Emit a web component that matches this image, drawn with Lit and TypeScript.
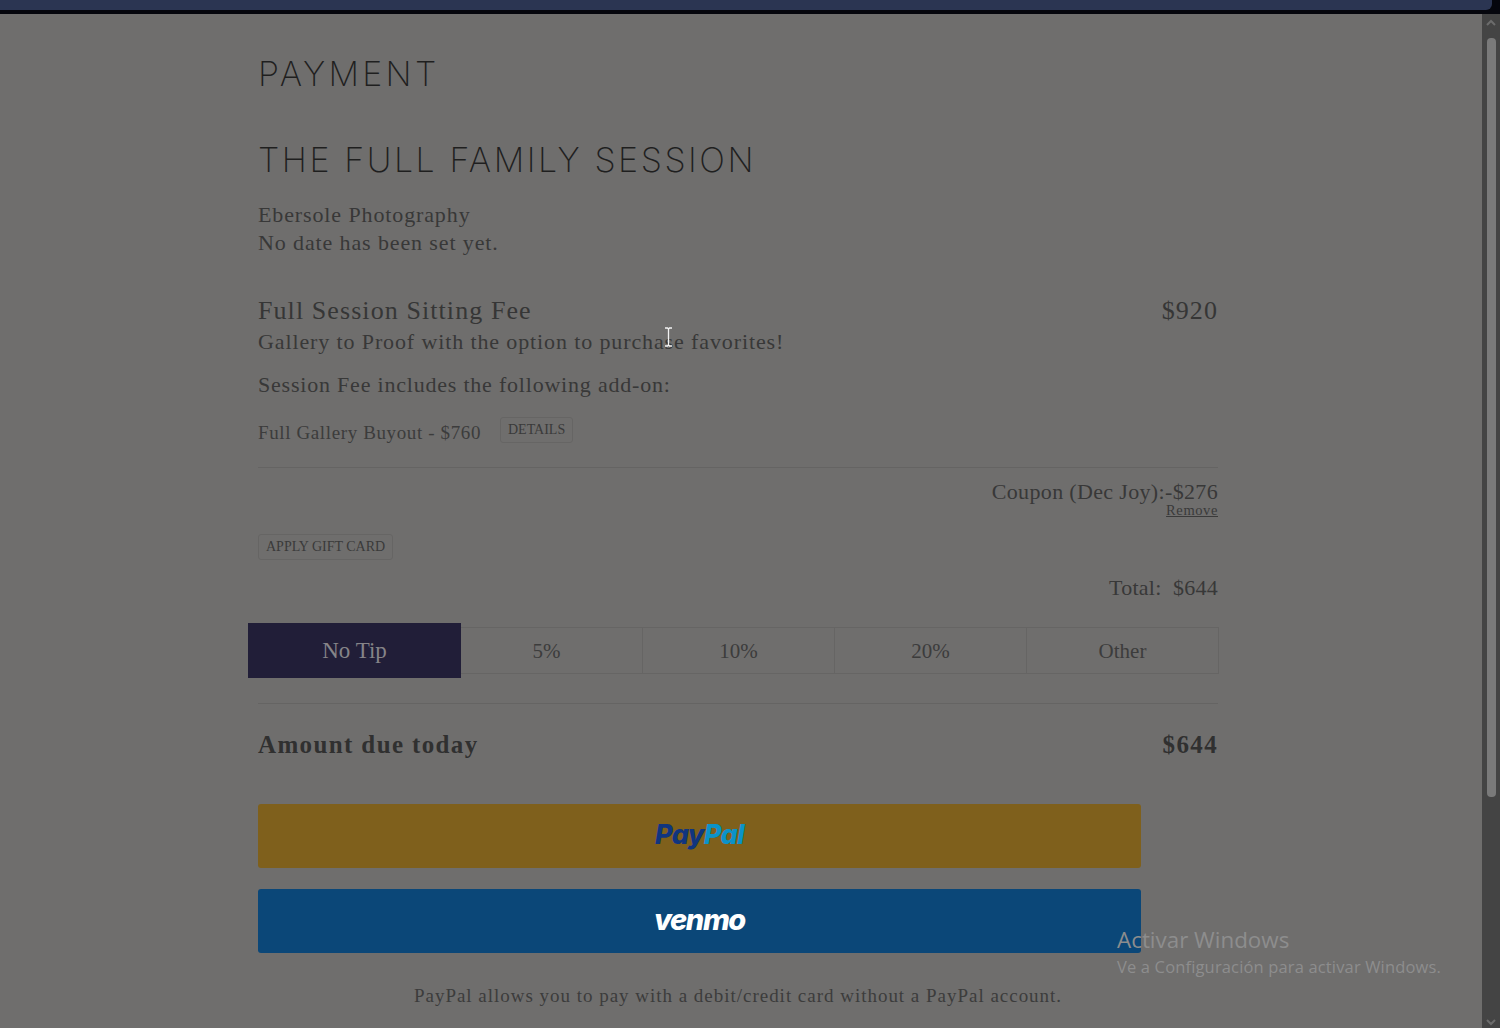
import { LitElement, html, css } from "lit";
import { customElement } from "lit/decorators.js";

@customElement("app-root")
export class AppRoot extends LitElement {
  static styles = css`
    :host {
      display: block;
      height: 1028px;
      overflow: hidden;
      position: relative;
      background: #6f6e6d;
      font-family: "Liberation Serif", "DejaVu Serif", serif;
      color: #393939;
    }
    .frame { background: #05060d; height: 14px; }
    .topbar { height: 10px; background: #2b3552; border-bottom-right-radius: 6px; margin-right: 8px; }
    .body { display: flex; height: 1014px; }
    .page { flex: 1; padding-left: 258px; overflow: hidden; }
    .col { width: 960px; }
    h1, h2 {
      margin: 0;
      font-family: Inter, "DejaVu Sans", sans-serif;
      font-weight: 200;
      color: #1f1f1f;
    }
    h1 { font-size: 34px; line-height: 40px; margin-top: 40px; letter-spacing: 3.3px; }
    h2 { font-size: 34px; line-height: 40px; margin-top: 46px; letter-spacing: 2.55px; }
    .meta { margin-top: 21px; font-size: 22px; line-height: 28px; letter-spacing: 0.88px; color: #383838; }
    .row { display: flex; justify-content: space-between; align-items: center; }
    .fee { margin-top: 39px; font-size: 26px; line-height: 30px; letter-spacing: 1.08px; color: #363636; }
    .desc { font-size: 22px; line-height: 30px; margin-top: 1px; letter-spacing: 0.88px; color: #383838; }
    .addon-title { font-size: 22px; line-height: 30px; margin-top: 13px; letter-spacing: 0.79px; color: #383838; }
    .addon { display: flex; align-items: center; margin-top: 20px; font-size: 19px; letter-spacing: 0.62px; color: #3c3c3c; line-height: 26px; }
    .btn {
      display: inline-block;
      border: 1px solid #666564;
      border-radius: 3px;
      font-size: 14px;
      line-height: 22px;
      padding: 1px 7px;
      color: #3a3a3a;
      letter-spacing: 0;
    }
    .addon .btn { margin-left: 19px; position: relative; top: -3px; }
    .rule { height: 1px; background: #656463; }
    .r1 { margin-top: 21px; }
    .coupon { text-align: right; margin-top: 12px; font-size: 22px; line-height: 24px; letter-spacing: 0.34px; color: #383838; }
    .remove { display: block; font-size: 14.5px; line-height: 14px; letter-spacing: 0.6px; text-decoration: underline; margin-top: -1px; color: #3a3a3a; }
    .gift { margin-top: 17px; }
    .total { text-align: right; margin-top: 14px; font-size: 22px; line-height: 28px; letter-spacing: 0.25px; color: #383838; }
    .tips { display: flex; align-items: center; margin: 21px 0 0 -10px; width: 971px; height: 55px; }
    .tip {
      height: 47px;
      box-sizing: border-box;
      display: flex;
      align-items: center;
      justify-content: center;
      border: 1px solid #666564;
      border-left: 0;
      padding-top: 1px;
      font-size: 21px;
      color: #3c3c3c;
      width: 192px;
    }
    .tip.five { width: 182px; padding-right: 10px; }
    .tip.on {
      width: 213px;
      height: 55px;
      background: #211e38;
      color: #858488;
      border: 0;
      font-size: 23px;
    }
    .r2 { margin-top: 25px; }
    .due { margin-top: 26px; font-size: 25px; line-height: 30px; font-weight: 700; letter-spacing: 1.37px; color: #303030; }
    .pay {
      width: 883px;
      height: 64px;
      box-sizing: border-box;
      border-radius: 3px;
      display: flex;
      align-items: center;
      justify-content: center;
      font-family: Inter, "Open Sans", sans-serif;
      font-style: italic;
      font-weight: 800;
    }
    .paypal { background: #7f601c; margin-top: 44px; font-size: 27px; letter-spacing: -0.7px; padding-bottom: 3px; }
    .paypal .a { color: #10357f; }
    .paypal .b { color: #0b93c9; }
    .venmo { background: #0b4778; margin-top: 21px; color: #fff; font-size: 29px; letter-spacing: -1.4px; padding-bottom: 4px; }
    .note { margin-top: 32px; text-align: center; font-size: 19px; line-height: 22px; letter-spacing: 0.98px; color: #3c3c3c; }
    .scroll {
      width: 18px;
      flex: none;
      background: #444444;
      display: flex;
      flex-direction: column;
      align-items: center;
      position: relative;
    }
    .scroll svg { flex: none; }
    .thumb { width: 9px; height: 759px; background: #7a7a7a; border-radius: 4px; margin-top: 12px; flex: none; }
    .down { position: absolute; bottom: 2px; }
    .up { margin-top: 5px; }
    .wm { position: absolute; left: 1117px; top: 926px; font-family: "Open Sans", sans-serif; color: #8d8d8d; }
    .wm b { display: block; font-weight: 400; font-size: 22.4px; line-height: 28px; }
    .wm span { display: block; font-size: 16.5px; line-height: 26px; letter-spacing: 0.15px; }
    .cursor { position: absolute; left: 664px; top: 327px; }
  `;

  render() {
    return html`
      <div class="frame"><div class="topbar"></div></div>
      <div class="body">
        <main class="page">
          <div class="col">
            <h1>PAYMENT</h1>
            <h2>THE FULL FAMILY SESSION</h2>
            <div class="meta">Ebersole Photography<br />No date has been set yet.</div>
            <div class="row fee"><span>Full Session Sitting Fee</span><span>$920</span></div>
            <div class="desc">Gallery to Proof with the option to purchase favorites!</div>
            <div class="addon-title">Session Fee includes the following add-on:</div>
            <div class="addon"><span>Full Gallery Buyout - $760</span><span class="btn">DETAILS</span></div>
            <div class="rule r1"></div>
            <div class="coupon">Coupon (Dec Joy):-$276<a class="remove">Remove</a></div>
            <div class="gift"><span class="btn">APPLY GIFT CARD</span></div>
            <div class="total">Total:&nbsp; $644</div>
            <div class="tips">
              <div class="tip on">No Tip</div>
              <div class="tip five">5%</div>
              <div class="tip">10%</div>
              <div class="tip">20%</div>
              <div class="tip">Other</div>
            </div>
            <div class="rule r2"></div>
            <div class="row due"><span>Amount due today</span><span>$644</span></div>
            <div class="pay paypal"><span class="a">Pay</span><span class="b">Pal</span></div>
            <div class="pay venmo">venmo</div>
            <div class="note">PayPal allows you to pay with a debit/credit card without a PayPal account.</div>
          </div>
        </main>
        <div class="scroll">
          <svg class="up" width="10" height="7" viewBox="0 0 10 7"><path d="M1 6l4-4 4 4" fill="none" stroke="#6c6c6c" stroke-width="2"/></svg>
          <div class="thumb"></div>
          <svg class="down" width="10" height="7" viewBox="0 0 10 7"><path d="M1 1l4 4 4-4" fill="none" stroke="#6c6c6c" stroke-width="2"/></svg>
        </div>
      </div>
      <div class="wm"><b>Activar Windows</b><span>Ve a Configuración para activar Windows.</span></div>
      <svg class="cursor" width="9" height="20" viewBox="0 0 9 20"><path d="M1 1h2.500l1 1 1-1H8M4.500 2v16M1 19h2.500l1-1 1 1H8" fill="none" stroke="#f2f2f2" stroke-width="1.300"/></svg>
    `;
  }
}
